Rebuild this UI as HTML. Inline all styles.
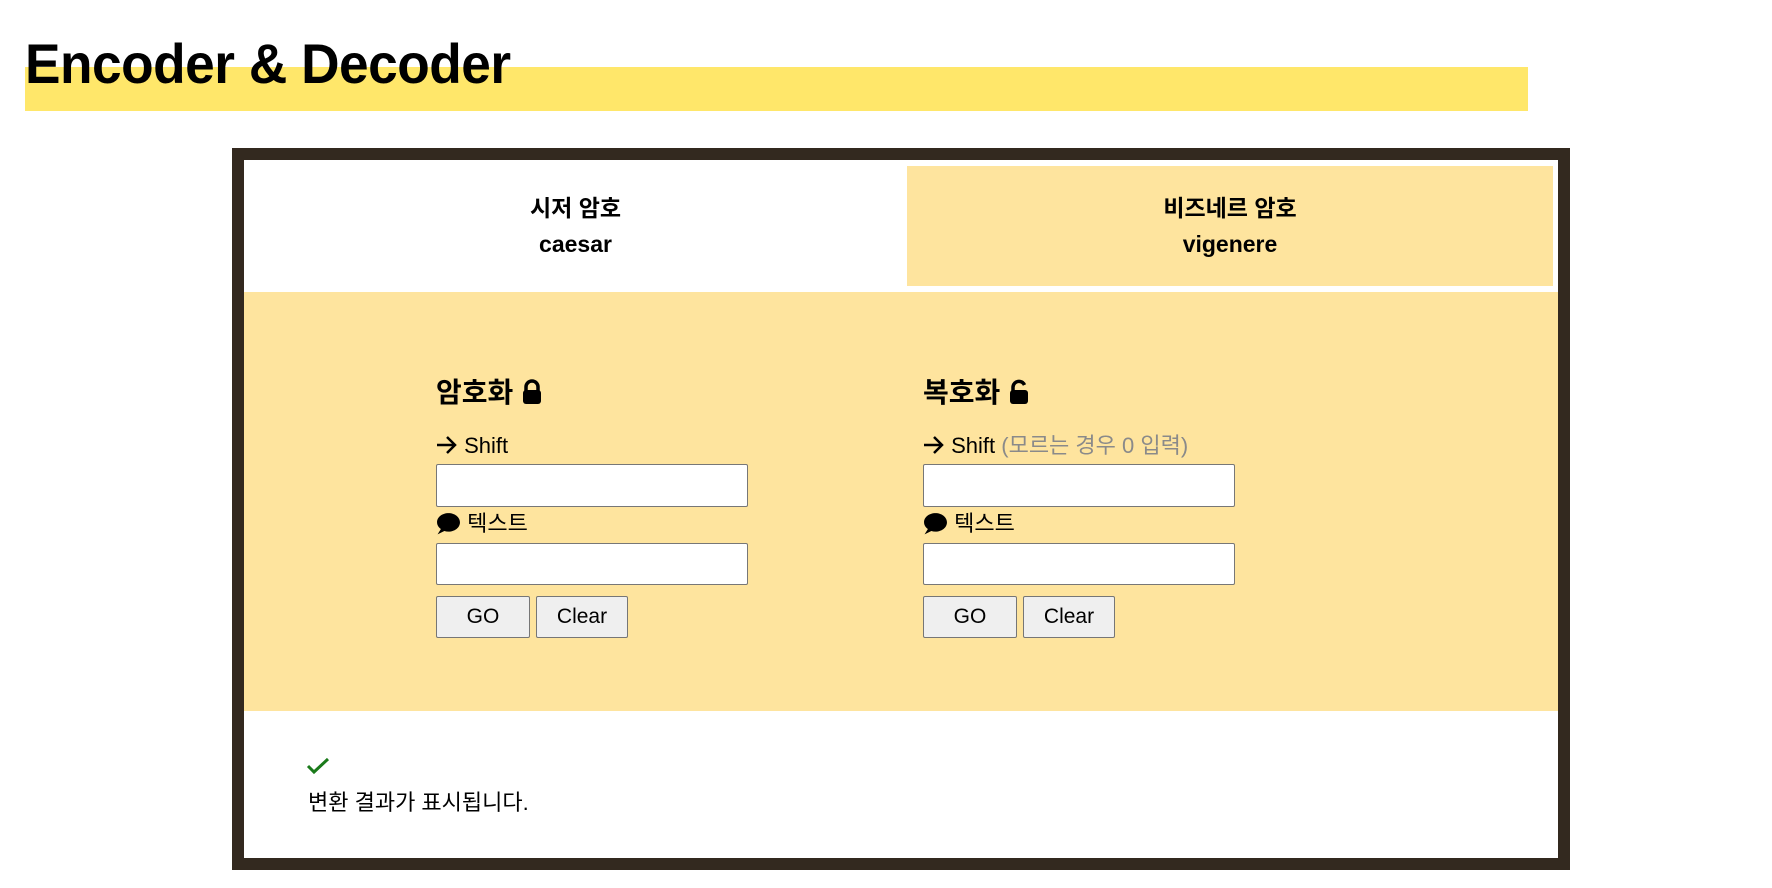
<!DOCTYPE html>
<html><head><meta charset="utf-8"><style>
*{margin:0;padding:0;box-sizing:border-box}
body{width:1772px;height:888px;background:#fff;position:relative;overflow:hidden;font-family:"Liberation Sans","Noto Sans CJK KR",sans-serif;color:#000}
.a{position:absolute}
h1{position:absolute;left:25px;top:30px;font-size:56px;font-weight:700;line-height:68px;letter-spacing:-0.5px;transform:scaleX(0.95);transform-origin:0 0;z-index:2}
.bar{left:25px;top:67px;width:1503px;height:44px;background:#ffe76a}
.box{left:232px;top:148px;width:1338px;height:722px;border:12px solid #33291f;background:#fff}
.tabt{font-size:23px;font-weight:700;text-align:center;line-height:36px}
.lbl{font-size:22px;line-height:26px}
.inp{width:312px;height:43px;background:#fff;border:1px solid #777;border-radius:2px}
.btn{height:42px;background:#efefef;border:1px solid #767676;border-radius:2px;font-size:21px;text-align:center;line-height:40px}
.ar{display:inline-block;width:22px;height:20px;vertical-align:-2px}
.sb{display:inline-block;width:25px;height:23px;vertical-align:-4px}
</style></head><body>
<div class="a bar"></div>
<h1>Encoder &amp; Decoder</h1>
<div class="a box"></div>
<div class="a" style="left:907px;top:166px;width:646px;height:120px;background:#fee49e"></div>
<div class="a tabt" style="left:244px;top:190px;width:663px">시저 암호<br>caesar</div>
<div class="a tabt" style="left:907px;top:190px;width:646px">비즈네르 암호<br>vigenere</div>
<div class="a" style="left:244px;top:292px;width:1314px;height:419px;background:#fee49e"></div>

<div class="a" style="left:436px;top:375px;font-size:28px;font-weight:700;line-height:36px">암호화 <svg width="22" height="26" viewBox="0 0 22 26" style="vertical-align:-3px"><path d="M5 12V8a6 6 0 0 1 12 0v4" fill="none" stroke="#000" stroke-width="3.5"/><rect x="2" y="11" width="18" height="14" rx="3"/></svg></div>
<div class="a lbl" style="left:436px;top:433px"><svg class="ar" viewBox="0 0 22 20"><path d="M1 10h18M11 2l8 8-8 8" fill="none" stroke="#000" stroke-width="2.5"/></svg> Shift</div>
<div class="a inp" style="left:436px;top:464px"></div>
<div class="a lbl" style="left:436px;top:511px"><svg class="sb" viewBox="0 0 24 22"><path d="M12 1C6 1 1 4.8 1 9.8c0 2.6 1.4 4.9 3.7 6.5L1.5 21.5l6.5-3.3c1.3.4 2.6.6 4 .6 6 0 11-3.9 11-8.9S18 1 12 1z"/></svg> <span>텍스트</span></div>
<div class="a inp" style="left:436px;top:543px;height:42px"></div>
<div class="a btn" style="left:436px;top:596px;width:94px">GO</div>
<div class="a btn" style="left:536px;top:596px;width:92px">Clear</div>

<div class="a" style="left:923px;top:375px;font-size:28px;font-weight:700;line-height:36px">복호화 <svg width="22" height="26" viewBox="0 0 22 26" style="vertical-align:-3px"><path d="M5 12V8a6 6 0 0 1 11.5-2" fill="none" stroke="#000" stroke-width="3.5"/><rect x="2" y="11" width="18" height="14" rx="3"/></svg></div>
<div class="a lbl" style="left:923px;top:433px"><svg class="ar" viewBox="0 0 22 20"><path d="M1 10h18M11 2l8 8-8 8" fill="none" stroke="#000" stroke-width="2.5"/></svg> Shift <span style="color:#8a8a8a">(모르는 경우 0 입력)</span></div>
<div class="a inp" style="left:923px;top:464px"></div>
<div class="a lbl" style="left:923px;top:511px"><svg class="sb" viewBox="0 0 24 22"><path d="M12 1C6 1 1 4.8 1 9.8c0 2.6 1.4 4.9 3.7 6.5L1.5 21.5l6.5-3.3c1.3.4 2.6.6 4 .6 6 0 11-3.9 11-8.9S18 1 12 1z"/></svg> <span>텍스트</span></div>
<div class="a inp" style="left:923px;top:543px;height:42px"></div>
<div class="a btn" style="left:923px;top:596px;width:94px">GO</div>
<div class="a btn" style="left:1023px;top:596px;width:92px">Clear</div>

<svg class="a" style="left:306px;top:757px" width="24" height="18" viewBox="0 0 24 18"><path d="M2 9l6 6L22 2" fill="none" stroke="#1a7a1a" stroke-width="3"/></svg>
<div class="a lbl" style="left:308px;top:790px">변환 결과가 표시됩니다.</div>
</body></html>
